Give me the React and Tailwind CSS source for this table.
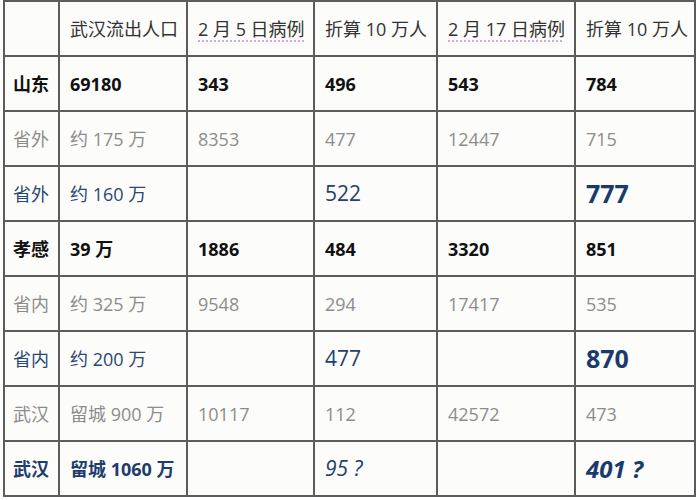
import React from "react";

const widths = [55, 128, 127, 123, 138, 120];

// each cell: [text, style key]
const rows = [
  { tone: "head", cells: ["", "武汉流出人口", "2 月 5 日病例", "折算 10 万人", "2 月 17 日病例", "折算 10 万人"] },
  { tone: "bold", cells: ["山东", "69180", "343", "496", "543", "784"] },
  { tone: "grey", cells: ["省外", "约 175 万", "8353", "477", "12447", "715"] },
  { tone: "blue", cells: ["省外", "约 160 万", "", "522", "", "777"] },
  { tone: "bold", cells: ["孝感", "39 万", "1886", "484", "3320", "851"] },
  { tone: "grey", cells: ["省内", "约 325 万", "9548", "294", "17417", "535"] },
  { tone: "blue", cells: ["省内", "约 200 万", "", "477", "", "870"] },
  { tone: "grey", cells: ["武汉", "留城 900 万", "10117", "112", "42572", "473"] },
  { tone: "navy", cells: ["武汉", "留城 1060 万", "", "95 ?", "", "401 ?"] },
];

function cellClass(tone, i) {
  if (tone === "head") return "text-[18px] text-[#333]";
  if (tone === "bold") return "text-[18px] font-bold text-[#111]";
  if (tone === "grey") return "text-[18px] text-[#8c8c8c]";
  if (tone === "blue") {
    if (i === 5) return "text-[25px] font-bold text-[#1b3a6c]";
    if (i === 3) return "text-[21px] text-[#24406e]";
    return "text-[18px] text-[#2a4776]";
  }
  // navy last row
  if (i === 5) return "text-[24px] font-bold italic text-[#1b3a6c]";
  if (i === 3) return "text-[21px] italic text-[#24406e]";
  return "text-[18px] font-bold text-[#1f3c6e]";
}

export default function App() {
  return (
    <div
      className="w-[700px] h-[500px] bg-white pl-[3px] pt-0"
      style={{ fontFamily: '"Open Sans", "Noto Sans CJK SC", sans-serif' }}
    >
      <table className="table-fixed border-collapse bg-[#fcfcfa] w-[693px]">
        <colgroup>
          {widths.map((w, i) => (
            <col key={i} style={{ width: w }} />
          ))}
        </colgroup>
        <tbody>
          {rows.map((r, ri) => (
            <tr key={ri} className="h-[55px]">
              {r.cells.map((c, ci) => (
                <td
                  key={ci}
                  className={`border-2 border-[#5c5c5c] align-middle whitespace-nowrap leading-none ${
                    ci === 0 ? "pl-[8px]" : "pl-[10px]"
                  } ${cellClass(r.tone, ci)}`}
                >
                  {r.tone === "head" && (ci === 2 || ci === 4) ? (
                    <span className="underline decoration-dotted decoration-[#d79ad7] underline-offset-[5px]">{c}</span>
                  ) : (
                    c
                  )}
                </td>
              ))}
            </tr>
          ))}
        </tbody>
      </table>
    </div>
  );
}
